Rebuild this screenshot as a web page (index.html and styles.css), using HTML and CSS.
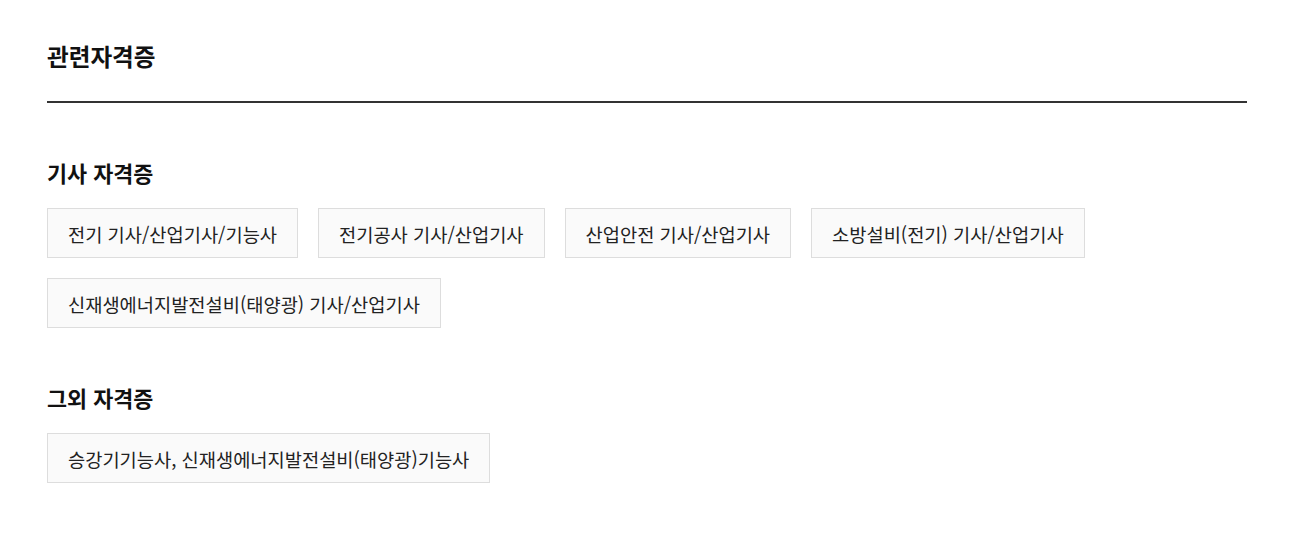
FILE: index.html
```html
<!DOCTYPE html>
<html lang="ko">
<head>
<meta charset="utf-8">
<link rel="stylesheet" href="styles.css">
</head>
<body>
<div class="wrap">
  <h2 class="title">관련자격증</h2>
  <section class="group">
    <h3 class="group-title">기사 자격증</h3>
    <ul class="tags">
      <li class="tag">전기 기사/산업기사/기능사</li>
      <li class="tag">전기공사 기사/산업기사</li>
      <li class="tag">산업안전 기사/산업기사</li>
      <li class="tag">소방설비(전기) 기사/산업기사</li>
      <li class="tag">신재생에너지발전설비(태양광) 기사/산업기사</li>
    </ul>
  </section>
  <section class="group">
    <h3 class="group-title">그외 자격증</h3>
    <ul class="tags">
      <li class="tag">승강기기능사, 신재생에너지발전설비(태양광)기능사</li>
    </ul>
  </section>
</div>
</body>
</html>
```
FILE: styles.css
```css
* { box-sizing: border-box; }
body {
  margin: 0;
  background: #fff;
  color: #111;
  font-family: "Noto Sans CJK KR", "Noto Sans", sans-serif;
}
.wrap {
  padding: 37px 53px 0 47px;
}
.title {
  margin: 0;
  font-size: 23.6px;
  font-weight: 700;
  line-height: 38px;
  padding-bottom: 26px;
  border-bottom: 2px solid #333;
}
.group { margin-top: 55px; }
.group-title {
  margin: 0 0 20px;
  font-size: 21.8px;
  font-weight: 700;
  line-height: 30px;
}
.tags {
  list-style: none;
  margin: 0;
  padding: 0;
  display: flex;
  flex-wrap: wrap;
  gap: 20px;
}
.tag {
  height: 50px;
  padding: 0 20px;
  display: flex;
  align-items: center;
  background: #fafafa;
  border: 1px solid #ddd;
  font-size: 18.7px;
  color: #222;
}
```
